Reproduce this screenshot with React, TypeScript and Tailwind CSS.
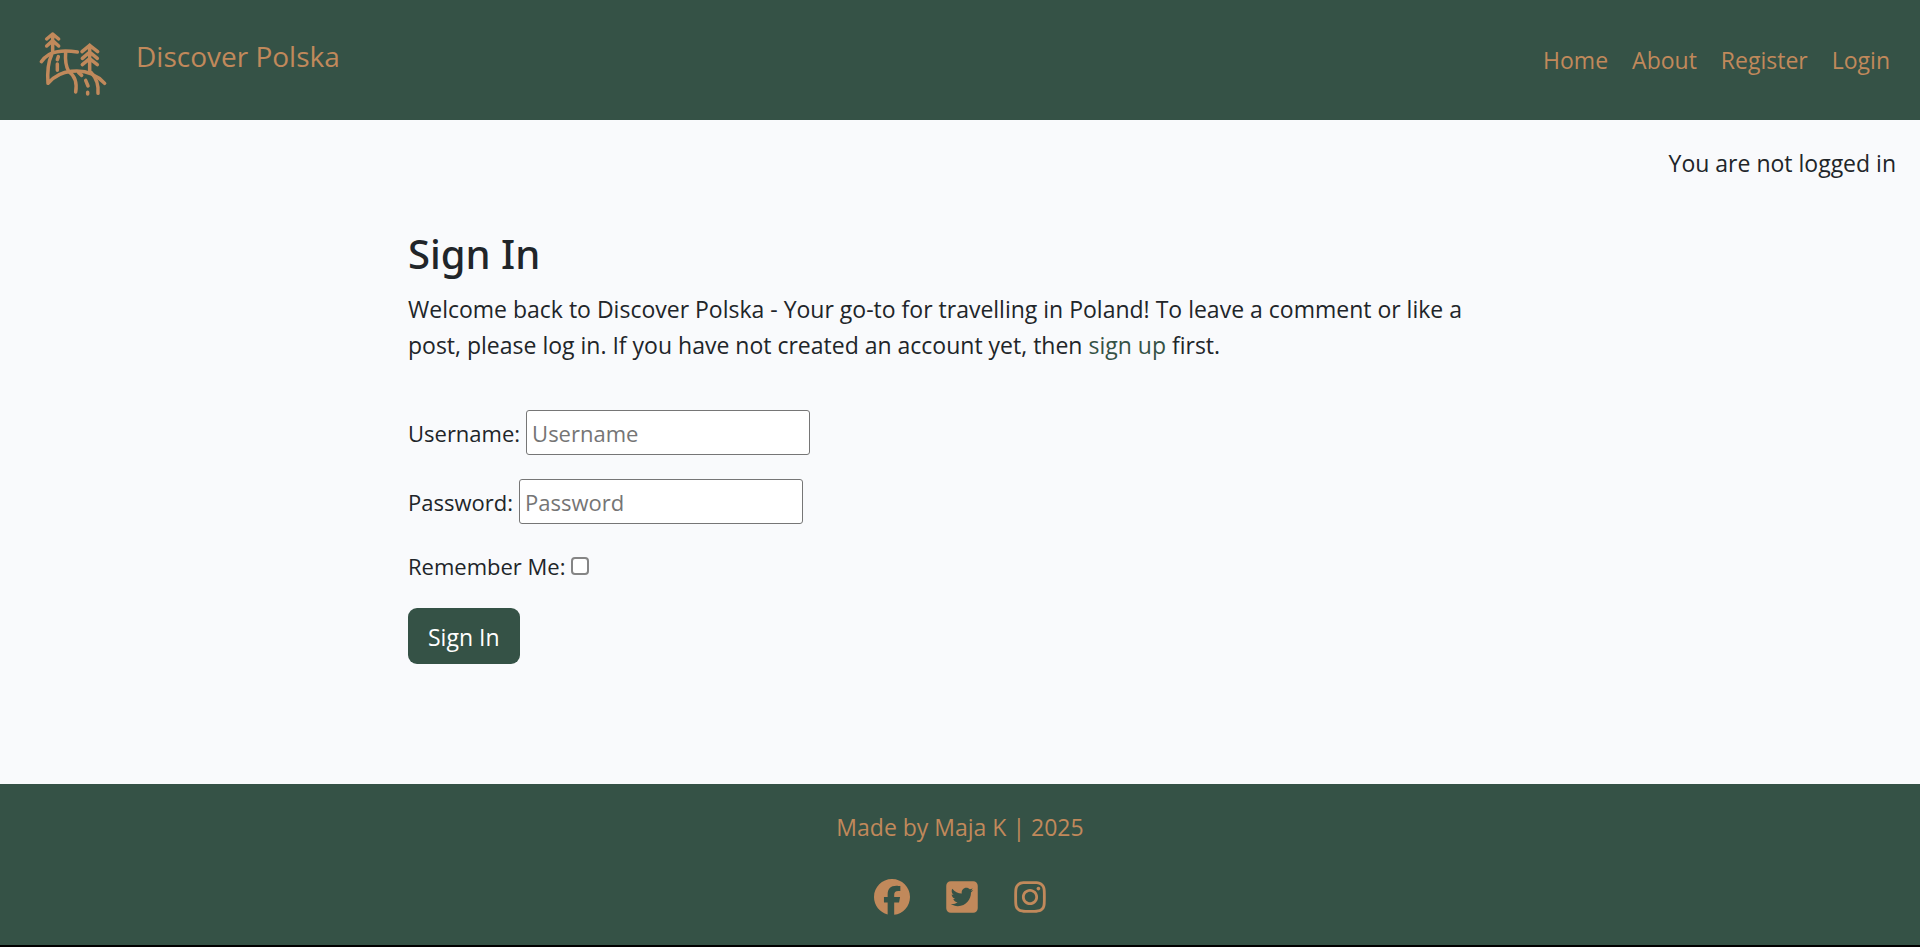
import { FaFacebook, FaInstagram, FaSquareTwitter } from "react-icons/fa6";

const navLinks = ["Home", "About", "Register", "Login"];

const socialLinks = [
  { label: "Facebook", Icon: FaFacebook, width: "w-9" },
  { label: "Twitter", Icon: FaSquareTwitter, width: "w-8" },
  { label: "Instagram", Icon: FaInstagram, width: "w-8" },
];

const fields = [
  { id: "username", label: "Username", type: "text" },
  { id: "password", label: "Password", type: "password" },
];

function Logo() {
  return (
    <svg
      viewBox="48 42 216 216"
      className="size-[72px]"
      fill="none"
      stroke="currentColor"
      strokeWidth="10.5"
      strokeLinecap="round"
      strokeLinejoin="round"
      aria-hidden="true"
    >
      <path d="M98 72V126M80 87L98 72L116 87M80 108L98 92L116 108" />
      <path d="M209 106V184M186 125L209 106L233 125M187 145L209 126L232 145M187 164L209 146L232 164" />
      <path d="M64 155Q82 129 112 125Q138 121 172 126" />
      <path d="M95 134Q80 165 84 220Q112 188 154 184Q214 177 254 220" />
      <path d="M137 127Q134 162 146 184Q174 204 167 246" />
      <path d="M115 140L112 149M112 162V181" />
      <path d="M176 188L185 196M197 211L204 228M203 247V252" />
      <path d="M214 188Q237 212 234 250" />
    </svg>
  );
}

export default function App() {
  return (
    <div className="flex min-h-screen flex-col border-b-2 border-black bg-[#f9fafc] font-['Open_Sans','Noto_Sans',sans-serif] text-[23px] leading-9 text-[#212529]">
      <header className="flex h-[120px] items-center justify-between bg-[#355246] pr-[30px] pl-9 text-[#c1895b]">
        <a href="#" className="flex items-center gap-7">
          <Logo />
          <span className="pb-2 text-[28px]">Discover Polska</span>
        </a>
        <nav className="flex gap-6">
          {navLinks.map((name) => (
            <a key={name} href="#">
              {name}
            </a>
          ))}
        </nav>
      </header>

      <main className="flex-1">
        <p className="px-6 pt-[25px] text-right">You are not logged in</p>
        <div className="mx-auto max-w-[1104px] pt-12">
          <h1 className="pb-3 font-['Noto_Sans',sans-serif] text-[40px] leading-[50px] font-medium">Sign In</h1>
          <p>
            Welcome back to Discover Polska - Your go-to for travelling in Poland! To leave a comment or like a
            post, please log in. If you have not created an account yet, then{" "}
            <a href="#" className="text-[#355246]">
              sign up
            </a>{" "}
            first.
          </p>
          <form className="mt-[47px] flex flex-col items-start gap-6" onSubmit={(e) => e.preventDefault()}>
            {fields.map(({ id, label, type }) => (
              <div key={id} className="flex items-center gap-1.5 text-[22px]">
                <label htmlFor={id}>{label}:</label>
                <input
                  id={id}
                  type={type}
                  placeholder={label}
                  className="h-[45px] w-[284px] rounded-[3px] border border-[#767676] bg-white px-[5px] placeholder:text-[#757575]"
                />
              </div>
            ))}
            <div className="flex items-center gap-1.5 text-[22px]">
              <label htmlFor="remember">Remember Me:</label>
              <input
                id="remember"
                type="checkbox"
                className="size-[18px] appearance-none rounded-[4px] border-2 border-[#858585] bg-white checked:bg-[#355246]"
              />
            </div>
            <button type="submit" className="h-14 rounded-[9px] bg-[#355246] px-5 pt-0.5 text-white">
              Sign In
            </button>
          </form>
        </div>
      </main>

      <footer className="flex flex-col items-center bg-[#355246] pt-[25px] pb-[30px] text-[#c1895b]">
        <p>Made by Maja K | 2025</p>
        <div className="mt-[34px] flex gap-9">
          {socialLinks.map(({ label, Icon, width }) => (
            <a key={label} href="#" aria-label={label} className={width}>
              <Icon className="h-9 w-full" />
            </a>
          ))}
        </div>
      </footer>
    </div>
  );
}
